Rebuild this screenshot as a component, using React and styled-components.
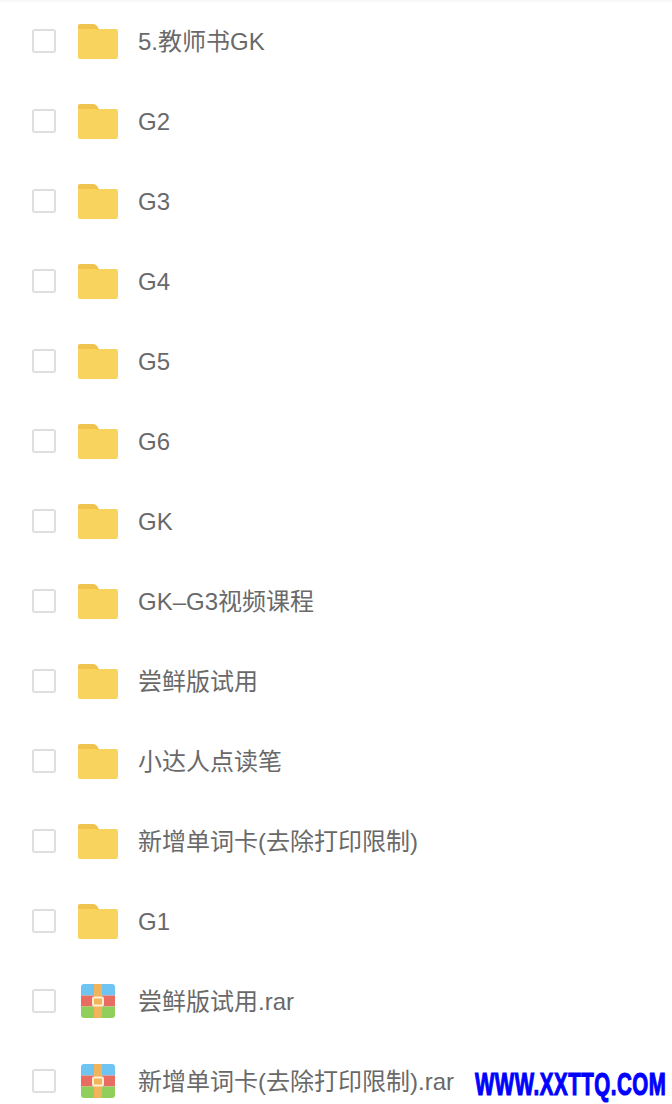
import React from 'react';
import styled, { createGlobalStyle } from 'styled-components';

const GlobalStyle = createGlobalStyle`
  html, body {
    margin: 0;
    padding: 0;
    background: #fff;
    overflow: hidden;
  }
`;

const Page = styled.div`
  position: relative;
  width: 672px;
  height: 1104px;
  overflow: hidden;
  background: #fff;
  font-family: "Liberation Sans", "Noto Sans CJK SC", sans-serif;
`;

const TopStrip = styled.div`
  height: 2px;
  margin-bottom: -1px;
  background: #f7f7f7;
`;

const FileList = styled.ul`
  list-style: none;
  margin: 0;
  padding: 0;
`;

const Row = styled.li`
  display: flex;
  align-items: center;
  height: 80px;
  padding-left: 32px;
`;

const Checkbox = styled.span`
  flex: none;
  width: 24px;
  height: 24px;
  box-sizing: border-box;
  border: 2px solid #dedede;
  border-radius: 3px;
  margin-right: 22px;
`;

const IconSlot = styled.span`
  flex: none;
  display: flex;
  width: 40px;
  height: 40px;
  margin-right: 20px;
  align-items: center;
  justify-content: center;
`;

const Name = styled.span`
  margin-top: 2px;
  font-size: 24px;
  line-height: 32px;
  color: #696969;
  white-space: nowrap;
`;

const Watermark = styled.div`
  position: absolute;
  left: 475px;
  top: 1063px;
  font-family: "Liberation Sans", sans-serif;
  font-size: 32px;
  line-height: 42px;
  font-weight: 700;
  letter-spacing: 0.85px;
  color: #0000ff;
  -webkit-text-stroke: 1.2px #0000ff;
  white-space: nowrap;
  transform: scaleX(0.64);
  transform-origin: left center;
`;

const FolderIcon = () => (
  <svg width="40" height="35" viewBox="0 0 40 35">
    <path d="M2 0h13c2 0 3 .8 4 2l2 3H0V2a2 2 0 0 1 2-2z" fill="#f0c44c" />
    <path d="M0 5h38a2 2 0 0 1 2 2v26a2 2 0 0 1-2 2H2a2 2 0 0 1-2-2z" fill="#f8d45e" />
  </svg>
);

const RarIcon = () => (
  <svg width="34" height="34" viewBox="0 0 34 34">
    <defs>
      <clipPath id="rar-clip">
        <rect width="34" height="34" rx="3" />
      </clipPath>
    </defs>
    <g clipPath="url(#rar-clip)">
      <rect width="34" height="11.5" fill="#6fc4f2" />
      <rect y="11.5" width="34" height="11" fill="#e96c62" />
      <rect y="22.5" width="34" height="11.5" fill="#90cf5c" />
      <rect x="13" width="8" height="34" fill="#f2b45a" />
      <rect x="12" y="13.5" width="10" height="8" rx="1" fill="none" stroke="#fdeed2" strokeWidth="2" />
    </g>
  </svg>
);

const files = [
  { name: '5.教师书GK' },
  { name: 'G2' },
  { name: 'G3' },
  { name: 'G4' },
  { name: 'G5' },
  { name: 'G6' },
  { name: 'GK' },
  { name: 'GK–G3视频课程' },
  { name: '尝鲜版试用' },
  { name: '小达人点读笔' },
  { name: '新增单词卡(去除打印限制)' },
  { name: 'G1' },
  { name: '尝鲜版试用.rar', rar: true },
  { name: '新增单词卡(去除打印限制).rar', rar: true },
];

const App = () => (
  <Page>
    <GlobalStyle />
    <TopStrip />
    <FileList>
      {files.map((file) => (
        <Row key={file.name}>
          <Checkbox />
          <IconSlot>{file.rar ? <RarIcon /> : <FolderIcon />}</IconSlot>
          <Name>{file.name}</Name>
        </Row>
      ))}
    </FileList>
    <Watermark>WWW.XXTTQ.COM</Watermark>
  </Page>
);

export default App;
